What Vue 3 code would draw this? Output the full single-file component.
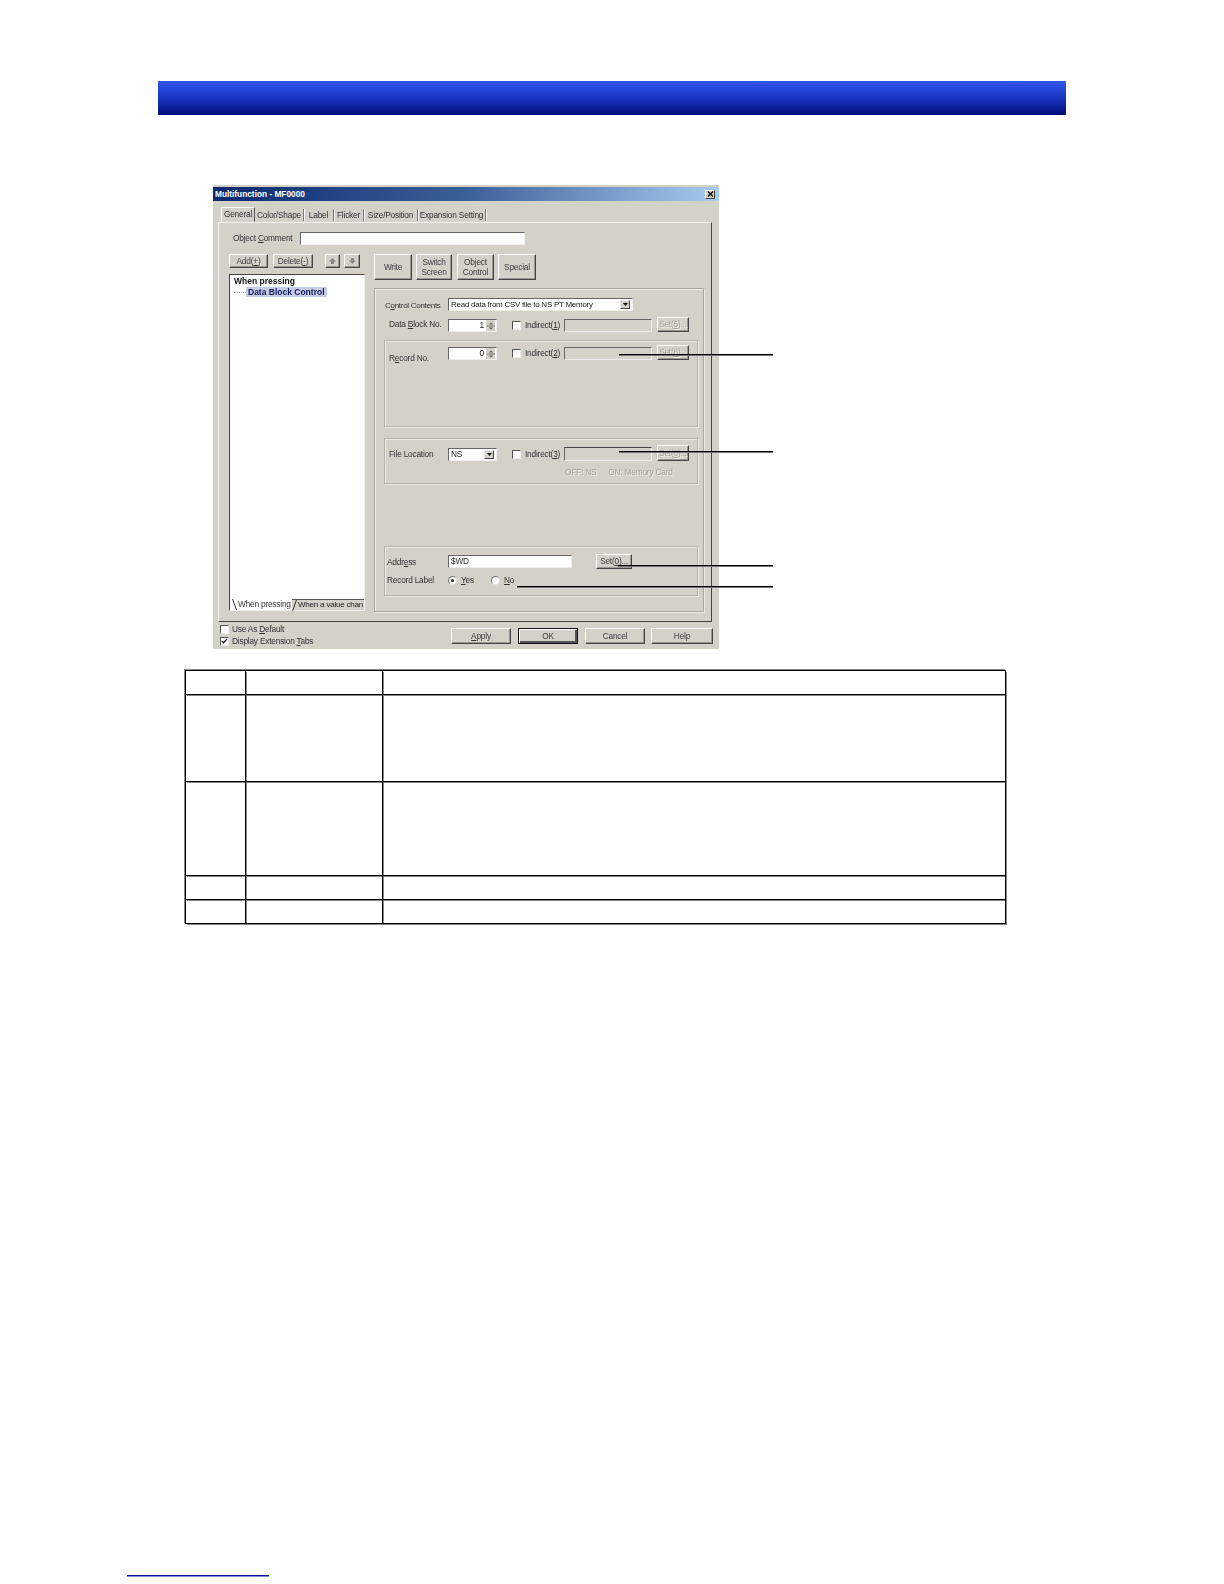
<script setup>
const tabs = ['General', 'Color/Shape', 'Label', 'Flicker', 'Size/Position', 'Expansion Setting']
const bigButtons = [
  { key: 'write', lines: ['Write'] },
  { key: 'switch', lines: ['Switch', 'Screen'] },
  { key: 'object', lines: ['Object', 'Control'] },
  { key: 'special', lines: ['Special'] }
]
const rows = [
  { key: 'head', cls: 'r-head' },
  { key: 'one', cls: 'r-one' },
  { key: 'two', cls: 'r-two' },
  { key: 'three', cls: 'r-head' },
  { key: 'four', cls: 'r-head' }
]
</script>

<template>
  <div class="page">
    <div class="band"></div>

    <section class="dialog">
      <header class="titlebar">
        <span class="title">Multifunction - MF0000</span>
        <span class="close">
          <svg width="8" height="7" viewBox="0 0 8 7"><path d="M1 0.5 7 6.5M7 0.5 1 6.5" stroke="#111" stroke-width="1.5" fill="none" /></svg>
        </span>
      </header>

      <nav class="tabstrip">
        <span v-for="(t, i) in tabs" :key="t" class="tab" :class="{ active: i === 0 }">{{ t }}</span>
      </nav>

      <div class="panel">
        <div class="comment-row">
          <span class="comment-label">Object <u>C</u>omment</span>
          <span class="field comment-input"></span>
        </div>

        <div class="main">
          <div class="left-col">
            <div class="toolbar">
              <button class="btn add">Add(<u>+</u>)</button>
              <button class="btn del">Delete(<u>-</u>)</button>
              <button class="btn up">
                <svg width="7" height="6" viewBox="0 0 7 6"><path d="M3.5 0 7 3.5H5V6H2V3.5H0Z" fill="#888" /></svg>
              </button>
              <button class="btn down">
                <svg width="7" height="6" viewBox="0 0 7 6"><path d="M3.5 6 7 2.5H5V0H2V2.5H0Z" fill="#888" /></svg>
              </button>
            </div>
            <div class="tree">
              <div class="tree-body">
                <div class="node-root">When pressing</div>
                <div class="node-child"><i class="dots"></i><span class="node-sel">Data Block Control</span></div>
              </div>
              <div class="tree-tabs">
                <svg class="slant" width="5" height="11" viewBox="0 0 5 11"><path d="M0.5 0 4.5 11" stroke="#333" fill="none" /></svg>
                <span class="ttab first">When pressing</span>
                <span class="ttab second">
                  <svg class="slant" width="5" height="11" viewBox="0 0 5 11"><path d="M4.5 0 0.5 11" stroke="#333" fill="none" /></svg>
                  When a value chan
                </span>
              </div>
            </div>
          </div>

          <div class="right-col">
            <div class="big-buttons">
              <button v-for="b in bigButtons" :key="b.key" class="btn big" :class="b.key">
                <span v-for="l in b.lines" :key="l">{{ l }}</span>
              </button>
            </div>

            <div class="group-main">
              <div class="row-control">
                <span class="lbl lbl-control">C<u>o</u>ntrol Contents</span>
                <span class="field select select-wide">
                  <span class="select-text">Read data from CSV file to NS PT Memory</span>
                  <span class="combo-btn"><svg width="7" height="4" viewBox="0 0 7 4"><path d="M0 0H7L3.5 4Z" fill="#111" /></svg></span>
                </span>
              </div>

              <div class="row-data">
                <span class="lbl lbl-data">Data <u>B</u>lock No.</span>
                <span class="field spin">
                  <span class="spin-value">1</span>
                  <span class="spin-btns">
                    <svg width="8" height="10" viewBox="0 0 8 10"><path d="M4 1.5 6 3.5H2ZM2 6.5H6L4 8.5Z" fill="#555" /><path d="M0 5H8" stroke="#777" /></svg>
                  </span>
                </span>
                <span class="indirect"><i class="check"></i>Indirect(<u>1</u>)</span>
                <span class="field disabled-field"></span>
                <button class="btn set-btn off">Set(<u>5</u>)...</button>
              </div>

              <div class="sub record-group">
                <div class="row-sub">
                  <span class="lbl lbl-sub lbl-low">R<u>e</u>cord No.</span>
                  <span class="field spin">
                    <span class="spin-value">0</span>
                    <span class="spin-btns">
                      <svg width="8" height="10" viewBox="0 0 8 10"><path d="M4 1.5 6 3.5H2ZM2 6.5H6L4 8.5Z" fill="#555" /><path d="M0 5H8" stroke="#777" /></svg>
                    </span>
                  </span>
                  <span class="indirect"><i class="check"></i>Indirect(<u>2</u>)</span>
                  <span class="field disabled-field"></span>
                  <button class="btn set-btn off">Set(<u>6</u>)...</button>
                </div>
              </div>

              <div class="sub file-group">
                <div class="row-sub">
                  <span class="lbl lbl-sub lbl-mid">File Location</span>
                  <span class="field select select-short">
                    <span class="select-text">NS</span>
                    <span class="combo-btn"><svg width="7" height="4" viewBox="0 0 7 4"><path d="M0 0H7L3.5 4Z" fill="#111" /></svg></span>
                  </span>
                  <span class="indirect"><i class="check"></i>Indirect(<u>3</u>)</span>
                  <span class="field disabled-field"></span>
                  <button class="btn set-btn off">Set(<u>8</u>)...</button>
                </div>
                <div class="hint-row">
                  <span>OFF: NS</span>
                  <span>ON: Memory Card</span>
                </div>
              </div>

              <div class="sub address-group">
                <div class="row-address">
                  <span class="lbl lbl-address lbl-addr-low">Addr<u>e</u>ss</span>
                  <span class="field address-input">$WD</span>
                  <button class="btn set-zero">Set(<u>0</u>)...</button>
                </div>
                <div class="row-radio">
                  <span class="lbl lbl-address">Record Label</span>
                  <span class="radio on"></span>
                  <span class="radio-text yes"><u>Y</u>es</span>
                  <span class="radio"></span>
                  <span class="radio-text"><u>N</u>o</span>
                </div>
              </div>
            </div>
          </div>
        </div>
      </div>

      <footer class="dialog-foot">
        <div class="foot-checks">
          <label class="foot-check"><i class="check"></i><span>Use As <u>D</u>efault</span></label>
          <label class="foot-check"><i class="check">
            <svg width="8" height="7" viewBox="0 0 8 7"><path d="M1 3.5 3 5.5 7 1" stroke="#111" stroke-width="1.6" fill="none" /></svg>
          </i><span>Display Extension <u>T</u>abs</span></label>
        </div>
        <div class="foot-buttons">
          <button class="btn foot-btn"><u>A</u>pply</button>
          <button class="btn foot-btn ok">OK</button>
          <button class="btn foot-btn">Cancel</button>
          <button class="btn foot-btn help">Help</button>
        </div>
      </footer>
    </section>

    <div class="tbl">
      <template v-for="r in rows" :key="r.key">
        <div class="cell" :class="r.cls"></div>
        <div class="cell" :class="r.cls"></div>
        <div class="cell" :class="r.cls"></div>
      </template>
    </div>

    <div class="foot-rule"></div>

    <i class="callout c1"></i>
    <i class="callout c2"></i>
    <i class="callout c3"></i>
    <i class="callout c4"></i>
  </div>
</template>

<style scoped>
.page {
  position: relative;
  width: 1224px;
  height: 1584px;
  padding-top: 81px;
  box-sizing: border-box;
  display: flex;
  flex-direction: column;
  background: #fff;
  font-family: "Liberation Sans", Arial, sans-serif;
  overflow: hidden;
}
.band {
  margin-left: 158px;
  width: 908px;
  height: 34px;
  flex: none;
  background: linear-gradient(180deg, #3056ea 0%, #1f3fd0 35%, #0f25a8 70%, #000a78 100%);
}

/* dialog */
.dialog {
  margin: 71px 0 0 213px;
  width: 506px;
  height: 463px;
  flex: none;
  box-sizing: border-box;
  padding-top: 1px;
  background: #d4d1c9;
  color: #333;
  font-size: 8.3px;
  letter-spacing: -0.2px;
  line-height: 1;
  display: flex;
  flex-direction: column;
  box-shadow: 0 -1px 0 #cfcfc8;
  filter: blur(0.35px);
}
.titlebar {
  height: 14px;
  flex: none;
  display: flex;
  align-items: center;
  justify-content: space-between;
  padding: 0 4px 0 2px;
  background: linear-gradient(90deg, #0b2a70 0%, #3a6098 50%, #a8cbee 100%);
}
.title {
  color: #fff;
  font-size: 8.3px;
  font-weight: 700;
  letter-spacing: 0;
}
.close {
  width: 10px;
  height: 9px;
  display: flex;
  align-items: center;
  justify-content: center;
  background: #d4d1c9;
  border: 1px solid;
  border-color: #fff #444 #444 #fff;
  box-sizing: border-box;
}
.close svg { width: 7px; height: 6px; }

.tabstrip {
  margin: 6px 0 0 8px;
  height: 15px;
  flex: none;
  display: grid;
  grid-template-columns: 34px 49px 30px 30px 54px 68px;
  justify-content: start;
}
.tab {
  display: flex;
  align-items: center;
  justify-content: center;
  border-right: 1px solid #777;
  box-shadow: 1px 0 0 #fff;
  margin: 2px 0 1px;
  white-space: nowrap;
}
.tab.active {
  margin: 0;
  border: 1px solid;
  border-color: #fff #555 transparent #fff;
  box-shadow: none;
  background: #d4d1c9;
}

.panel {
  margin-left: 5px;
  width: 494px;
  height: 400px;
  flex: none;
  box-sizing: border-box;
  border: 1px solid;
  border-color: #f4f3f0 #444 #444 #f4f3f0;
  padding: 9px 0 0 10px;
}
.comment-row {
  height: 13px;
  display: flex;
  align-items: center;
  padding-left: 4px;
}
.comment-label { width: 67px; flex: none; white-space: nowrap; }
.field {
  box-sizing: border-box;
  display: flex;
  align-items: center;
  background: #fff;
  border: 1px solid;
  border-color: #666 #eee #eee #666;
  color: #333;
}
.comment-input { width: 225px; height: 13px; }

.main {
  margin-top: 9px;
  display: flex;
  gap: 9px;
}
.left-col { width: 136px; flex: none; }
.toolbar {
  height: 14px;
  display: flex;
}
.btn {
  box-sizing: border-box;
  margin: 0;
  padding: 0;
  display: flex;
  align-items: center;
  justify-content: center;
  flex: none;
  font: inherit;
  letter-spacing: inherit;
  color: #3c3c3c;
  background: #d4d1c9;
  border: 1px solid;
  border-color: #fff #444 #444 #fff;
  box-shadow: inset -1px -1px 0 #9a9890;
  white-space: nowrap;
}
.add { width: 39px; margin-right: 5px; }
.del { width: 40px; margin-right: 12px; }
.up { width: 15px; margin-right: 4px; }
.down { width: 16px; }
.tree {
  margin-top: 6px;
  height: 337px;
  box-sizing: border-box;
  border: 1px solid;
  border-color: #444 #eee #eee #444;
  background: #fff;
  display: flex;
  flex-direction: column;
}
.tree-body { flex: 1; padding: 1px 0 0 4px; color: #111; font-size: 8.5px; letter-spacing: 0; }
.node-root { font-weight: 700; height: 11px; display: flex; align-items: center; }
.node-child { display: flex; align-items: center; height: 10px; }
.dots { width: 12px; border-top: 1px dotted #aaa; }
.node-sel {
  padding: 0 2px;
  height: 10px;
  display: flex;
  align-items: center;
  background: #c6cde2;
  color: #101a60;
  font-weight: 700;
  white-space: nowrap;
}
.tree-tabs {
  height: 11px;
  flex: none;
  display: flex;
  align-items: stretch;
  padding-left: 2px;
  white-space: nowrap;
  color: #333;
}
.slant { flex: none; }
.ttab { display: flex; align-items: center; }
.ttab.first { width: 54px; flex: none; padding-left: 1px; }
.ttab.second { flex: 1; min-width: 0; gap: 1px; background: #d4d1c9; border-top: 1px solid #555; color: #222; font-size: 8px; }

.right-col { width: 330px; flex: none; }
.big-buttons { height: 26px; display: flex; }
.big { flex-direction: column; gap: 1px; }
.write { width: 38px; margin-right: 4px; }
.switch { width: 36px; margin-right: 5px; }
.object { width: 37px; margin-right: 4px; }
.special { width: 38px; }

.group-main {
  margin-top: 8px;
  height: 324px;
  box-sizing: border-box;
  border: 1px solid #a9a79f;
  box-shadow: inset 1px 1px 0 #eceae4, 1px 1px 0 #eceae4;
  padding-top: 9px;
}
.lbl { flex: none; white-space: nowrap; }
.row-control {
  height: 13px;
  display: flex;
  align-items: center;
  padding-left: 10px;
}
.lbl-control { width: 63px; padding-top: 3px; font-size: 8px; letter-spacing: -0.28px; }
.select-wide { width: 185px; height: 13px; font-size: 8px; letter-spacing: -0.26px; }
.select { justify-content: space-between; padding: 0 2px 0 2px; color: #222; }
.select-text { white-space: nowrap; }
.combo-btn {
  width: 10px;
  height: 9px;
  box-sizing: border-box;
  display: flex;
  align-items: center;
  justify-content: center;
  background: #d4d1c9;
  border: 1px solid;
  border-color: #eee #444 #444 #eee;
}
.combo-btn svg { width: 5px; height: 3px; }

.row-data, .row-sub {
  display: flex;
  align-items: flex-end;
  height: 15px;
}
.row-data { margin-top: 6px; padding-left: 14px; }
.row-sub { padding-left: 4px; }
.lbl-data { width: 59px; align-self: center; }
.lbl-sub { width: 59px; }
.lbl-low { transform: translateY(2px); }
.lbl-mid { align-self: center; transform: translateY(1px); }
.spin {
  width: 49px;
  height: 13px;
  justify-content: flex-end;
  padding-right: 1px;
  flex: none;
}
.spin-value { margin-right: 2px; color: #222; }
.spin-btns { display: flex; background: #d4d1c9; width: 9px; height: 11px; align-items: center; justify-content: center; }
.indirect {
  margin-left: 15px;
  width: 52px;
  flex: none;
  height: 13px;
  display: flex;
  align-items: center;
  white-space: nowrap;
}
.check {
  width: 9px;
  height: 9px;
  margin-right: 4px;
  flex: none;
  box-sizing: border-box;
  background: #fff;
  border: 1px solid;
  border-color: #555 #eee #eee #555;
  display: flex;
  align-items: center;
  justify-content: center;
}
.check svg { width: 7px; height: 6px; }
.disabled-field {
  width: 88px;
  height: 13px;
  flex: none;
  background: #d4d1c9;
}
.set-btn { margin-left: 5px; width: 32px; height: 15px; }
.off { color: #a5a39b; text-shadow: 1px 1px 0 #f2f0ea; }

.sub {
  margin-left: 9px;
  width: 314px;
  box-sizing: border-box;
  border: 1px solid #b4b2aa;
  box-shadow: inset 1px 1px 0 #eceae4, 1px 1px 0 #eceae4;
}
.record-group { margin-top: 8px; height: 87px; padding-top: 4px; }
.file-group { margin-top: 11px; height: 46px; padding-top: 6px; }
.file-group .row-sub { height: 16px; }
.file-group .disabled-field { height: 14px; border-top-color: #444; }
.file-group .set-btn { height: 16px; }
.select-short { width: 49px; height: 13px; flex: none; }
.hint-row {
  margin-top: 7px;
  padding-left: 180px;
  display: flex;
  gap: 12px;
  color: #a3a199;
  text-shadow: 1px 1px 0 #eeece6;
  white-space: nowrap;
}
.address-group { margin-top: 62px; height: 50px; padding-top: 7px; }
.row-address {
  height: 15px;
  display: flex;
  align-items: center;
  padding-left: 2px;
}
.lbl-address { width: 61px; }
.lbl-addr-low { transform: translateY(1px); }
.address-input { width: 124px; height: 13px; padding-left: 2px; }
.set-zero { margin-left: 24px; width: 36px; height: 15px; }
.row-radio {
  margin-top: 5px;
  height: 13px;
  display: flex;
  align-items: center;
  padding-left: 2px;
}
.radio {
  width: 9px;
  height: 9px;
  flex: none;
  box-sizing: border-box;
  border-radius: 50%;
  background: #fff;
  border: 1px solid #777;
  border-right-color: #ddd;
  border-bottom-color: #ddd;
  display: flex;
  align-items: center;
  justify-content: center;
}
.radio.on::after {
  content: "";
  width: 3px;
  height: 3px;
  border-radius: 50%;
  background: #222;
}
.radio-text { margin-left: 4px; }
.radio-text.yes { width: 30px; flex: none; }

.dialog-foot {
  padding-left: 7px;
  height: 26px;
  flex: none;
  display: flex;
}
.foot-checks {
  width: 231px;
  flex: none;
  padding-top: 1px;
}
.foot-check {
  height: 12px;
  display: flex;
  align-items: center;
  white-space: pre;
}
.foot-check .check { margin-right: 3px; }
.foot-buttons {
  margin-top: 6px;
  display: flex;
  gap: 7px;
}
.foot-btn { width: 60px; height: 16px; }
.ok { border: 1px solid #111; box-shadow: inset 1px 1px 0 #fff, inset -2px -2px 0 #555; }
.help { width: 62px; margin-left: -1px; }

/* table */
.tbl {
  margin: 21px 0 0 185px;
  width: 821px;
  flex: none;
  display: grid;
  grid-template-columns: 60px 137px 1fr;
  box-sizing: border-box;
  border-top: 1px solid #000;
  border-left: 1px solid #000;
  box-shadow: -1px -1px 0 #888;
}
.cell {
  box-sizing: border-box;
  border-right: 1px solid #000;
  border-bottom: 1px solid #000;
  box-shadow: 1px 1px 0 #888;
}
.r-head { height: 24px; }
.r-one { height: 87px; }
.r-two { height: 94px; }

.foot-rule {
  margin: auto 0 8px 127px;
  width: 142px;
  height: 1px;
  flex: none;
  background: #10109a;
  box-shadow: 0 1px 0 #8a8ad0;
}

.callout {
  position: absolute;
  height: 1px;
  background: #000;
  box-shadow: 0 1px 0 #777;
}
.c1 { left: 619px; top: 354px; width: 154px; }
.c2 { left: 619px; top: 451px; width: 154px; }
.c3 { left: 618px; top: 565px; width: 155px; }
.c4 { left: 517px; top: 586px; width: 256px; }
</style>
